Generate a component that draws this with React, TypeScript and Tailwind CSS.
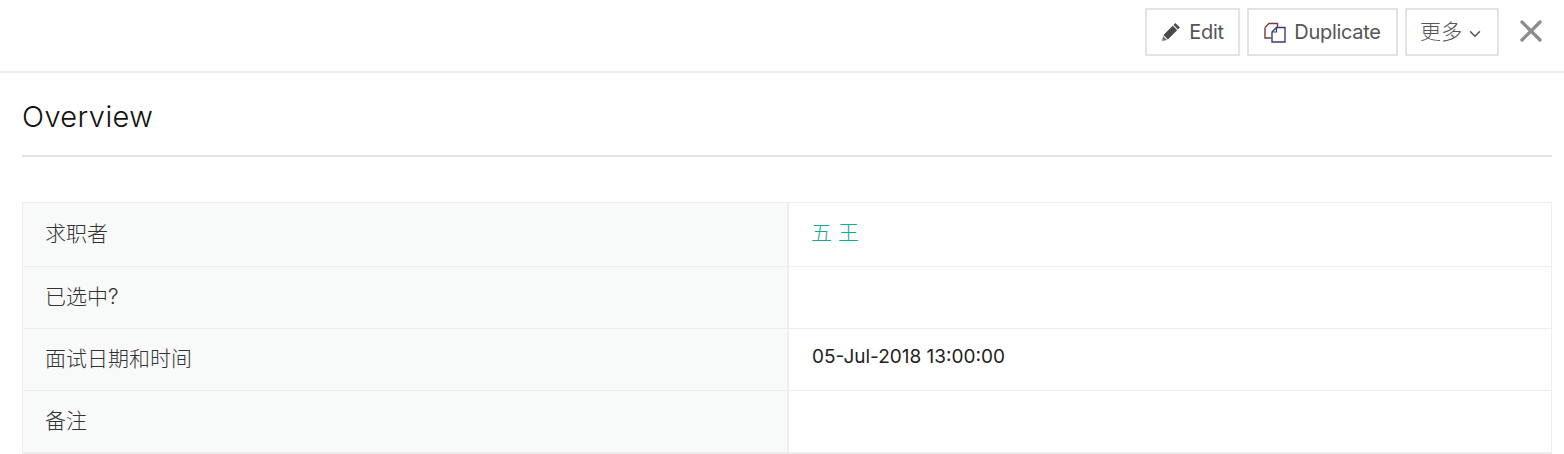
import React from 'react';
import { X, ChevronDown } from 'lucide-react';

const SANS = "font-['Inter','Noto_Sans_CJK_SC',sans-serif]";

const rows = [
  { label: '求职者', value: '五 王', link: true, h: 'h-[63px]' },
  { label: '已选中?', value: '', h: 'h-[62px]' },
  { label: '面试日期和时间', value: '05-Jul-2018 13:00:00', h: 'h-[62px]' },
  { label: '备注', value: '', h: 'h-[62px]' },
];

const PencilIcon = () => (
  <svg width="20" height="20" viewBox="0 0 18 18">
    <path d="M13 1 17 5 6.2 15.8 2.2 11.8Z" fill="#4a4a4a" />
    <path d="M1.8 12.6 5.4 16.2 1 17.2Z" fill="#8a6a50" />
    <path d="M11 3 15 7" stroke="#fff" strokeWidth="1" />
  </svg>
);

const CopyIcon = () => (
  <svg width="22" height="22" viewBox="0 0 22 22" fill="none">
    <path d="M1 6.5 5 2.5H13.5V7" stroke="#7a3a3a" strokeWidth="1.4" />
    <path d="M1 6.5V17H7.5" stroke="#7a3a3a" strokeWidth="1.4" />
    <path d="M8 11 12.5 6.5H21V21H8Z" fill="#fff" stroke="#3b3b7a" strokeWidth="1.4" />
    <path d="M8 11H12.5V6.5" stroke="#3b3b7a" strokeWidth="1.2" />
  </svg>
);

const App: React.FC = () => {
  return (
    <div className={`w-[1564px] h-[454px] overflow-hidden bg-white ${SANS}`}>
      {/* Toolbar */}
      <div className="h-[73px] border-b-2 border-[#eeeeee] flex items-start justify-end pt-2 pr-[15px] gap-[7px] text-[20px] text-[#555555]">
        <button className="w-[95px] h-12 border-2 border-[#e3e3e3] flex items-center justify-center gap-[8px] tracking-[-0.3px]">
          <PencilIcon />
          <span>Edit</span>
        </button>
        <button className="w-[151px] h-12 border-2 border-[#e3e3e3] flex items-center justify-center gap-[8px] tracking-[-0.3px]">
          <CopyIcon />
          <span>Duplicate</span>
        </button>
        <button className="w-[94px] h-12 border-2 border-[#e3e3e3] flex items-center justify-center gap-[4px]">
          <span className="text-[21px] font-light">更多</span>
          <ChevronDown size={18} strokeWidth={2} className="mt-[3px]" />
        </button>
        <X size={36} strokeWidth={2.2} className="ml-[7px] mt-[5px] text-[#8c8c8c]" />
      </div>

      <div className="pl-[22px] pr-[12px]">
        {/* Section title */}
        <div className="h-[84px] border-b-2 border-[#e3e3e3] pt-[25px]">
          <h2 className="text-[29px] leading-[38px] text-[#111111] font-light tracking-[0.4px]">Overview</h2>
        </div>

        {/* Detail table */}
        <div className="mt-[45px] border border-[#eeeeee] border-b-2">
          {rows.map((r, i) => (
            <div key={r.label} className={`flex ${r.h} ${i > 0 ? 'border-t border-[#eeeeee]' : ''}`}>
              <div className="w-[766px] bg-[#f8f9f9] border-r-2 border-[#eeeeee] flex items-center pl-[22px] pb-[2px] text-[21px] font-light text-[#333333]">
                {r.label}
              </div>
              <div className={`flex-1 flex items-center pb-[4px] ${r.link ? 'pl-[22px] text-[#16a98f] text-[21px] font-light' : 'pl-[23px] text-[19px] text-[#222222]'}`}>
                {r.value}
              </div>
            </div>
          ))}
        </div>
      </div>
    </div>
  );
};

export default App;
